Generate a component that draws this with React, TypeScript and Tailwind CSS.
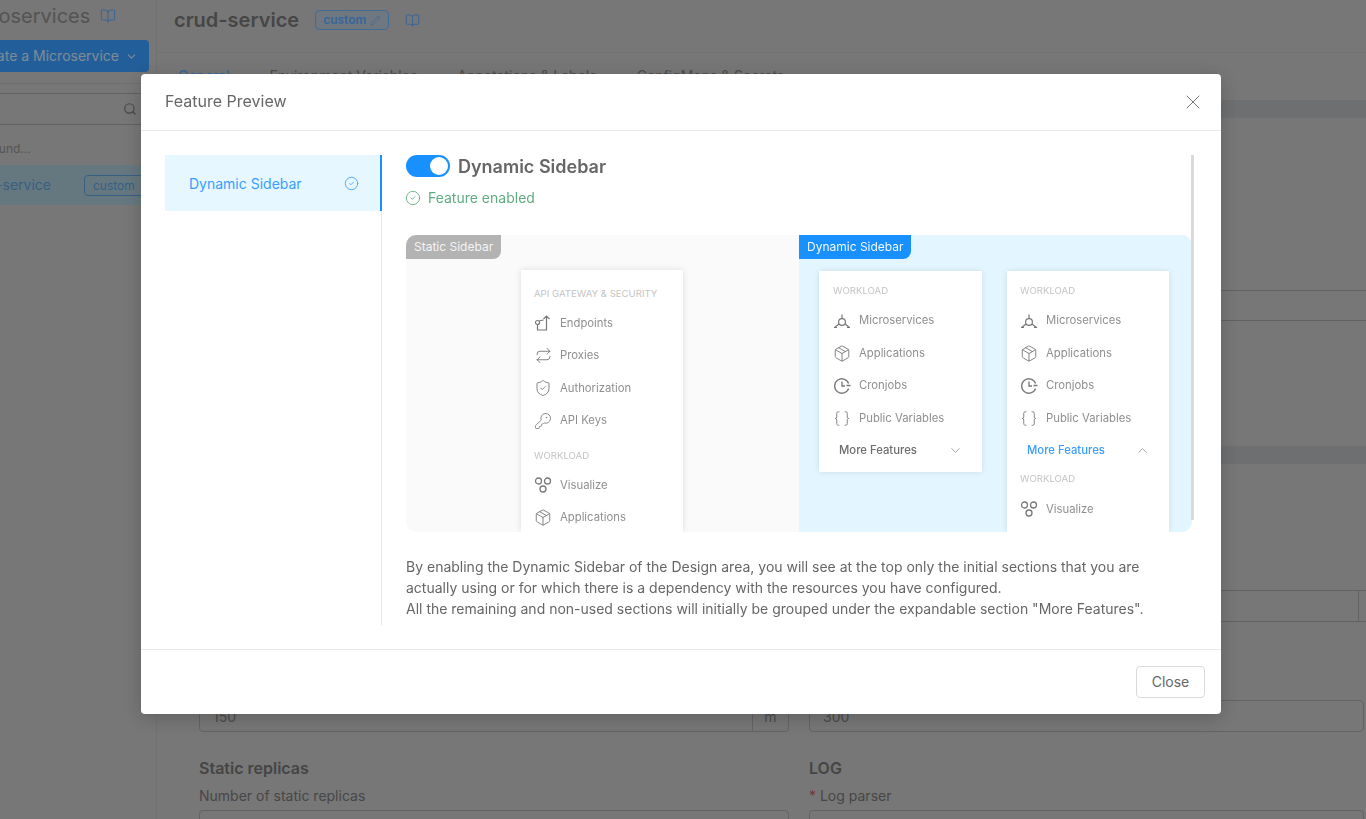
import type { ReactNode } from "react";
import {
  BookOpen,
  Braces,
  CircleCheck,
  ChevronDown,
  ChevronUp,
  KeyRound,
  Package,
  Pencil,
  Repeat,
  Search,
  ShieldCheck,
  X,
} from "lucide-react";

function MicroserviceIcon() {
  return (
    <svg viewBox="0 0 18 18" fill="none" stroke="currentColor" strokeWidth="1.2" className="h-[18px] w-[18px] shrink-0" aria-hidden="true">
      <circle cx="9" cy="10" r="3.4" />
      <path d="M9 2.5v4M6 12 1.5 15.5M12 12l4.5 3.5M1 15.5h3M14 15.5h3" />
    </svg>
  );
}

function EndpointIcon() {
  return (
    <svg viewBox="0 0 18 18" fill="none" stroke="currentColor" strokeWidth="1.2" className="h-[18px] w-[18px] shrink-0" aria-hidden="true">
      <circle cx="3.5" cy="8.5" r="2" />
      <path d="M3.5 10.5v5.5h9V2M9.5 5l3-3 3 3M5 7l4.5-1" />
    </svg>
  );
}

function VisualizeIcon() {
  return (
    <svg viewBox="0 0 18 18" fill="none" stroke="currentColor" strokeWidth="1.3" className="h-[18px] w-[18px] shrink-0" aria-hidden="true">
      <circle cx="4.5" cy="5" r="3" />
      <circle cx="13.5" cy="5" r="3" />
      <circle cx="9" cy="13" r="3" />
    </svg>
  );
}

function CronIcon() {
  return (
    <svg viewBox="0 0 18 18" fill="none" stroke="currentColor" strokeWidth="1.3" className="h-[18px] w-[18px] shrink-0" aria-hidden="true">
      <path d="M15.6 6.5A7.2 7.2 0 1 0 15.6 11.5" />
      <path d="M9 4.5V9h3M13.5 8.5h4" />
    </svg>
  );
}

function Row({ icon, label }: { icon: ReactNode; label: string }) {
  return (
    <div className="flex h-[32.5px] items-center gap-2 text-[11.3px] text-[#8f8f8f]">
      <span className="flex w-[18px] justify-center text-[#777]">{icon}</span>
      {label}
    </div>
  );
}

function GroupLabel({ children, className }: { children: string; className?: string }) {
  return <div className={`h-3 text-[9.6px] leading-3 text-[#c4c4c4] ${className ?? ""}`}>{children}</div>;
}

const boxIcon = <Package size={19} strokeWidth={1.2} />;

function WorkloadRows() {
  return (
    <>
      <GroupLabel className="mb-[7.5px]">WORKLOAD</GroupLabel>
      <Row icon={<MicroserviceIcon />} label="Microservices" />
      <Row icon={boxIcon} label="Applications" />
      <Row icon={<CronIcon />} label="Cronjobs" />
      <Row icon={<Braces size={19} strokeWidth={1.2} />} label="Public Variables" />
    </>
  );
}

function PreviewImage() {
  return (
    <div className="flex h-[297px] w-[786px] overflow-hidden rounded-[10px] blur-[0.4px]">
      <div className="w-[393px] bg-[#fafafa]">
        <div className="flex h-6 w-[95px] items-center rounded-br-lg bg-[#b3b3b3] pl-2 text-xs text-[#f4f4f4]">Static Sidebar</div>
        <div className="ml-[115px] mt-[11px] h-[262px] w-[162px] bg-white pl-[13px] pt-[18px] shadow-[0_0_6px_rgba(0,0,0,0.12)]">
          <GroupLabel className="mb-[7px]">API GATEWAY &amp; SECURITY</GroupLabel>
          <Row icon={<EndpointIcon />} label="Endpoints" />
          <Row icon={<Repeat size={17} strokeWidth={1.3} />} label="Proxies" />
          <Row icon={<ShieldCheck size={20} strokeWidth={1.2} />} label="Authorization" />
          <Row icon={<KeyRound size={20} strokeWidth={1.1} />} label="API Keys" />
          <GroupLabel className="mb-[7px] mt-[13px]">WORKLOAD</GroupLabel>
          <Row icon={<VisualizeIcon />} label="Visualize" />
          <Row icon={boxIcon} label="Applications" />
        </div>
      </div>
      <div className="flex-1 bg-[#e3f5fe]">
        <div className="flex h-6 w-28 items-center rounded-br-lg bg-[#1890ff] pl-2 text-xs text-[#f0f8ff]">Dynamic Sidebar</div>
        <div className="ml-5 mt-3 flex items-start gap-[25px]">
          <div className="h-[201px] w-[163px] bg-white pl-[14px] pt-[14px] shadow-[0_0_6px_rgba(0,0,0,0.1)]">
            <WorkloadRows />
            <div className="flex h-[32.5px] items-center justify-between pl-[6px] pr-[19px] text-[11.3px] font-medium text-[#6e6e6e]">
              More Features
              <ChevronDown size={15} strokeWidth={1.2} className="text-[#888]" />
            </div>
          </div>
          <div className="h-[261px] w-[162px] bg-white pl-[13px] pt-[14px] shadow-[0_0_6px_rgba(0,0,0,0.1)]">
            <WorkloadRows />
            <div className="flex h-[32.5px] items-center justify-between pl-[7px] pr-[19px] text-[11.3px] font-medium text-[#3a9dff]">
              More Features
              <ChevronUp size={15} strokeWidth={1.2} className="text-[#888]" />
            </div>
            <GroupLabel className="mb-[8px] mt-[6px]">WORKLOAD</GroupLabel>
            <Row icon={<VisualizeIcon />} label="Visualize" />
          </div>
        </div>
      </div>
    </div>
  );
}

function FeatureModal() {
  return (
    <div className="fixed inset-0 bg-black/40 pl-[141px] pt-[74px]">
      <div className="flex h-[640px] w-[1080px] flex-col rounded bg-white text-[#666] shadow-[0_4px_20px_rgba(0,0,0,0.2)]">
        <div className="flex h-[57px] items-center justify-between border-b border-[#e8e8e8] pb-[2px] pl-6 pr-[16px] text-base">
          Feature Preview
          <X size={24} strokeWidth={1} className="mt-[2px] text-[#777]" />
        </div>
        <div className="flex flex-1 px-6 pt-6">
          <div className="h-[470px] w-[217px] border-r border-[#e8e8e8]">
            <div className="-mr-px flex h-14 items-center justify-between border-r-2 border-[#1890ff] bg-[#e6f7ff] pl-6 pr-[21px] pt-[2px] text-sm text-[#3a9dff]">
              Dynamic Sidebar
              <CircleCheck size={15} strokeWidth={1.3} className="-mt-[2px]" />
            </div>
          </div>
          <div className="relative ml-6 w-[788px]">
            <div className="flex h-[22px] items-center gap-2">
              <div className="flex h-[22px] w-11 justify-end rounded-full bg-[#1890ff] p-[2px]">
                <div className="h-[18px] w-[18px] rounded-full bg-white" />
              </div>
              <div className="pt-[2px] text-lg font-semibold">Dynamic Sidebar</div>
            </div>
            <div className="mt-[10px] flex items-center gap-[7px] text-sm leading-[22px] text-[#5fac80]">
              <CircleCheck size={16} strokeWidth={1.3} className="-ml-px" />
              Feature enabled
            </div>
            <div className="mt-[26px]">
              <PreviewImage />
            </div>
            <p className="mt-6 w-[770px] text-sm leading-[21.2px]">
              By enabling the Dynamic Sidebar of the Design area, you will see at the top only the initial sections that you are
              actually using or for which there is a dependency with the resources you have configured.
              <br />
              All the remaining and non-used sections will initially be grouped under the expandable section "More Features".
            </p>
            <div className="absolute left-[785px] top-0 h-[365px] w-[3px] bg-[#d9d9d9]" />
          </div>
        </div>
        <div className="flex h-[65px] items-center justify-end border-t border-[#e8e8e8] pr-4">
          <button type="button" className="h-8 w-[69px] rounded border border-[#d9d9d9] bg-white text-sm text-[#666]">
            Close
          </button>
        </div>
      </div>
    </div>
  );
}

function Sidebar() {
  return (
    <aside className="h-full w-[157px] shrink-0 overflow-hidden border-r border-[#bcbcbc] bg-[#c6c6c6]">
      <div className="-ml-[43px] flex h-[40px] w-[220px] items-center gap-[10px] pb-2 text-xl text-[#8c8c8c]">
        Microservices
        <BookOpen size={16} strokeWidth={1.5} className="text-[#5aa8ff]" />
      </div>
      <div className="flex h-8 w-[149px] items-center justify-end gap-[6px] rounded-r bg-[#3a9dff] pr-[11px] text-sm text-[#d2e8fa]">
        <span className="whitespace-nowrap">Create a Microservice</span>
        <ChevronDown size={13} className="shrink-0" />
      </div>
      <div className="mt-[11px] border-t border-[#b7b7b7] pt-[9px]">
        <div className="flex h-8 items-center justify-end border-y border-[#a3a3a3] pr-[19px] text-[#767676]">
          <Search size={14} />
        </div>
      </div>
      <div className="-ml-[66px] mt-4 w-[200px] text-xs leading-4 text-[#8f8f8f]">No items found...</div>
      <div className="mt-2 flex h-10 w-[200px] items-center bg-[#aac8d4]">
        <span className="-ml-[34px] w-[118px] shrink-0 whitespace-nowrap text-sm text-[#5aa0dc]">crud-service</span>
        <span className="rounded border border-[#5aa0dc] px-2 text-xs leading-[19px] text-[#5aa0dc]">custom</span>
      </div>
    </aside>
  );
}

function Field({ value, suffix, label, wide }: { value: string; suffix?: string; label: string; wide?: boolean }) {
  return (
    <div className={wide ? "w-[590px]" : "min-w-0 flex-1"}>
      <div className="flex h-8 items-center justify-between rounded border border-[#a6a6a6] pl-[13px] pt-px text-sm text-[#808080]">
        {value}
        {suffix ? <span className="flex h-full w-9 items-center justify-center border-l border-[#a6a6a6]">{suffix}</span> : null}
      </div>
      <div className="mt-6 text-base font-semibold leading-6 text-[#737373]">{label}</div>
    </div>
  );
}

function MainPane() {
  return (
    <main className="min-w-0 flex-1 bg-[#c6c6c6]">
      <div className="flex h-[53px] items-center gap-4 border-b border-[#bebebe] pb-[12px] pl-[17px]">
        <span className="text-xl font-semibold text-[#767676]">crud-service</span>
        <span className="flex h-5 items-center gap-1 rounded border border-[#6cb4f5] bg-[#bac8d5] px-[7px] text-xs font-semibold text-[#5aa8ff]">
          custom
          <Pencil size={11} strokeWidth={1.2} />
        </span>
        <BookOpen size={15} strokeWidth={1.5} className="text-[#5aa8ff]" />
      </div>
      <div className="flex h-[47px] gap-10 pl-[21px] pt-[13px] text-sm text-[#808080]">
        <span className="text-[#5aa8ff]">General</span>
        <span>Environment Variables</span>
        <span>Annotations &amp; Labels</span>
        <span>ConfigMaps &amp; Secrets</span>
      </div>
      <div className="h-[18px] bg-[#b8babc]" />
      <div className="ml-[18px] h-[328px] pt-[172px]">
        <div className="h-[31px] border-y border-[#a3a3a3]" />
      </div>
      <div className="h-[18px] bg-[#b8babc]" />
      <div className="ml-[18px] pl-6 pt-[126px]">
        <div className="flex h-[32px] justify-end border-y border-[#a3a3a3]">
          <div className="w-[8px] border-l border-[#a3a3a3]" />
        </div>
        <div className="mr-[2px] mt-[78px] flex gap-5">
          <Field wide value="150" suffix="m" label="Static replicas" />
          <Field value="300" label="LOG" />
        </div>
        <div className="mr-[2px] flex gap-5 text-sm leading-5 text-[#767676]">
          <div className="mt-[6px] w-[590px]">
            Number of static replicas
            <div className="mt-1 h-8 rounded border border-[#a6a6a6]" />
          </div>
          <div className="mt-[6px] flex-1">
            <span className="text-[#c06060]">*</span> Log parser
            <div className="mt-1 h-8 rounded border border-[#a6a6a6]" />
          </div>
        </div>
      </div>
    </main>
  );
}

export default function App() {
  return (
    <div className="flex h-[819px] overflow-hidden font-['Inter',sans-serif]">
      <Sidebar />
      <MainPane />
      <FeatureModal />
    </div>
  );
}
